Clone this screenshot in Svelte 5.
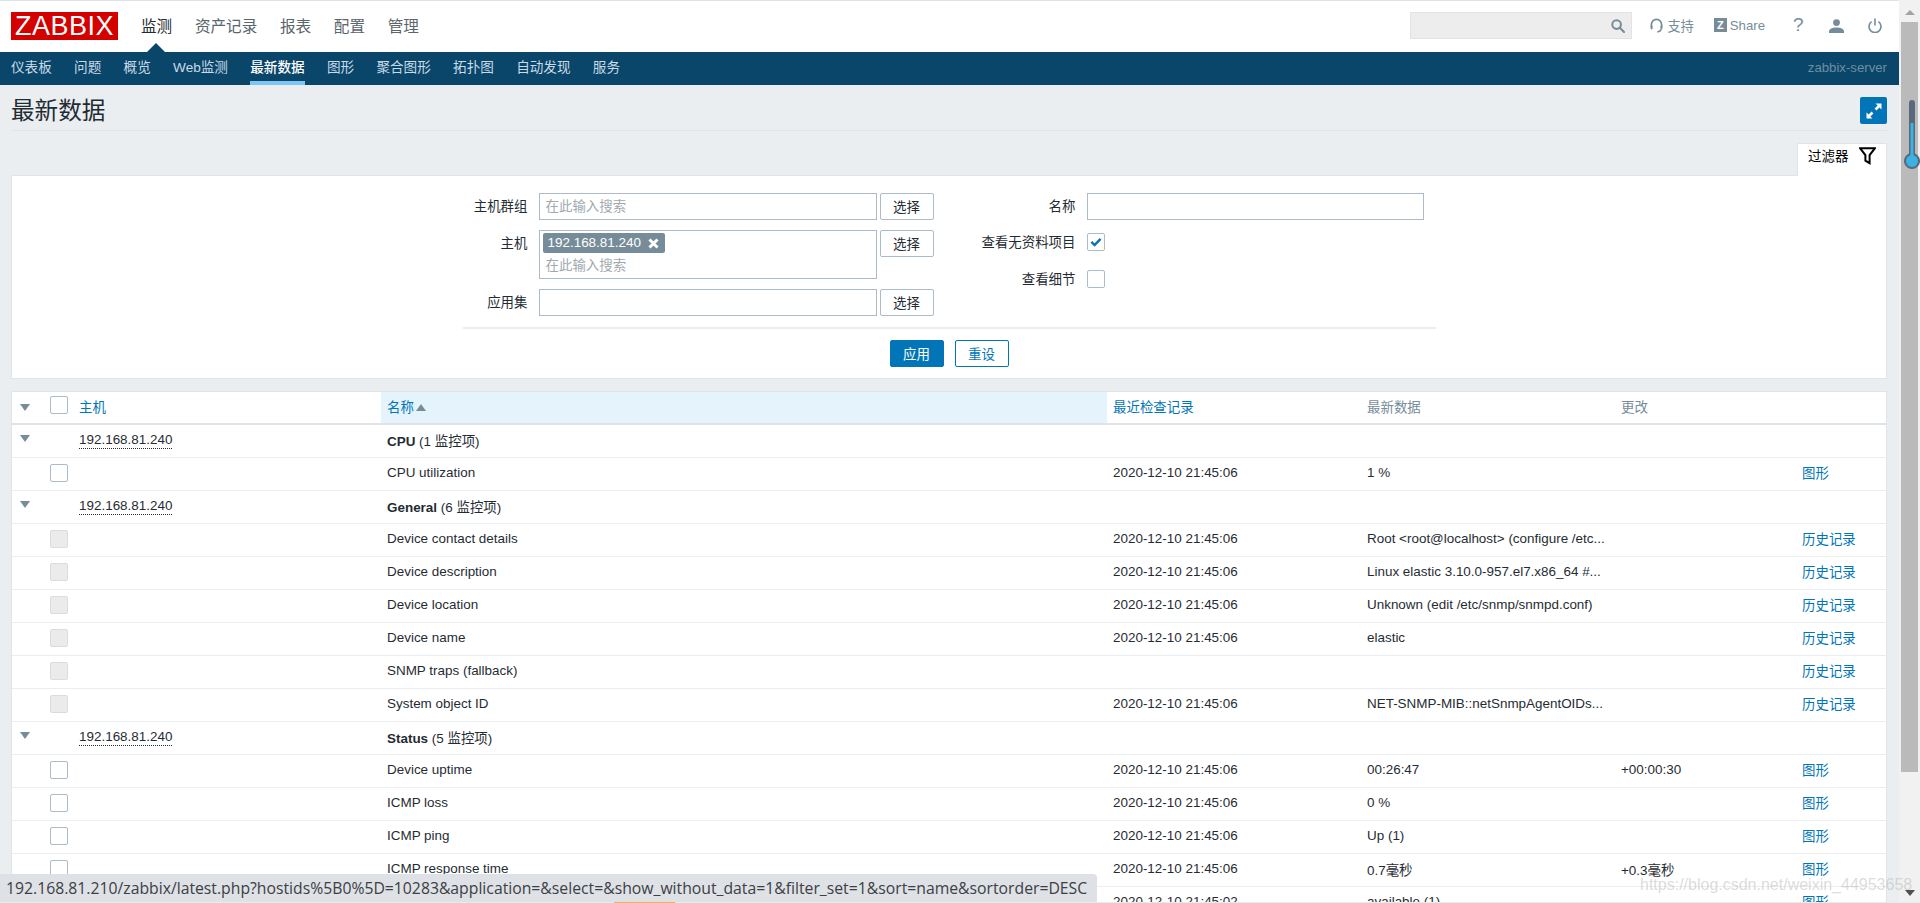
<script>
  const topNav = ['监测', '资产记录', '报表', '配置', '管理'];
  const subNav = ['仪表板', '问题', '概览', 'Web监测', '最新数据', '图形', '聚合图形', '拓扑图', '自动发现', '服务'];
  const T = '2020-12-10 21:45:06';
  const rows = [
    { group: 'CPU', count: '(1 监控项)' },
    { name: 'CPU utilization', time: T, value: '1 %', link: '图形' },
    { group: 'General', count: '(6 监控项)' },
    { name: 'Device contact details', time: T, value: 'Root <root@localhost> (configure /etc...', link: '历史记录', off: true },
    { name: 'Device description', time: T, value: 'Linux elastic 3.10.0-957.el7.x86_64 #...', link: '历史记录', off: true },
    { name: 'Device location', time: T, value: 'Unknown (edit /etc/snmp/snmpd.conf)', link: '历史记录', off: true },
    { name: 'Device name', time: T, value: 'elastic', link: '历史记录', off: true },
    { name: 'SNMP traps (fallback)', time: '', value: '', link: '历史记录', off: true },
    { name: 'System object ID', time: T, value: 'NET-SNMP-MIB::netSnmpAgentOIDs...', link: '历史记录', off: true },
    { group: 'Status', count: '(5 监控项)' },
    { name: 'Device uptime', time: T, value: '00:26:47', change: '+00:00:30', link: '图形' },
    { name: 'ICMP loss', time: T, value: '0 %', link: '图形' },
    { name: 'ICMP ping', time: T, value: 'Up (1)', link: '图形' },
    { name: 'ICMP response time', time: T, value: '0.7毫秒', change: '+0.3毫秒', link: '图形' },
    { name: '', time: '2020-12-10 21:45:02', value: 'available (1)', link: '图形' }
  ];
</script>

<div class="screen">
  <div class="page">
    <header class="topbar">
      <div class="logo">ZABBIX</div>
      <nav class="mainnav">
        {#each topNav as item, i}
          <span class="mainitem" class:current={i === 0}>{item}</span>
        {/each}
      </nav>
      <div class="search">
        <svg width="14" height="14" viewBox="0 0 14 14" fill="none" stroke="#768d99" stroke-width="2"><circle cx="5.6" cy="5.6" r="4.3" /><path d="M8.8 8.8 13 13" stroke-linecap="round" /></svg>
      </div>
      <span class="tool support">
        <svg width="13" height="15" viewBox="0 0 13 15" fill="none" stroke="#768d99" stroke-width="1.7"><path d="M1.4 9V6.4a5.1 5.1 0 0 1 10.2 0V9" /><rect x="0.6" y="7.6" width="2" height="4" rx="1" fill="#768d99" stroke="none" /><rect x="10.4" y="7.6" width="2" height="4" rx="1" fill="#768d99" stroke="none" /><path d="M11 11.4c-.4 1.6-1.6 2.4-3.6 2.4" /></svg>
        支持
      </span>
      <span class="tool share"><span class="zmark">Z</span>Share</span>
      <span class="tool help">?</span>
      <svg class="user" width="15" height="14" viewBox="0 0 15 14" fill="#768d99"><circle cx="7.5" cy="3.6" r="3.4" /><path d="M0 14v-1.6C0 10 3.6 8.6 7.5 8.6s7.5 1.4 7.5 3.8V14z" /></svg>
      <svg class="power" width="14" height="15" viewBox="0 0 14 15" fill="none" stroke="#768d99" stroke-width="1.6"><path d="M7 .5v7" /><path d="M3.6 3.6a6 6 0 1 0 6.8 0" /></svg>
    </header>

    <div class="subnav">
      {#each subNav as item, i}
        <span class="subitem" class:active={i === 4}>{item}</span>
      {/each}
      <span class="server">zabbix-server</span>
    </div>

    <main class="content">
      <div class="titlebar">
        <h1>最新数据</h1>
        <button class="expand" aria-label="全屏">
          <svg width="18" height="18" viewBox="0 0 18 18" fill="#fff"><path d="M10.5 1.5H16.5V7.5L14.4 5.4 11.4 8.4 9.6 6.6 12.6 3.6z" /><path d="M7.5 16.5H1.5V10.5L3.6 12.6 6.6 9.6 8.4 11.4 5.4 14.4z" /></svg>
        </button>
      </div>

      <div class="tabrow">
        <div class="filtertab">
          <span>过滤器</span>
          <svg width="17" height="18" viewBox="0 0 17 18" fill="none" stroke="#000" stroke-width="2"><path d="M1 1.2h15L10.6 8.2v8L6.4 13.6V8.2z" /></svg>
        </div>
      </div>

      <section class="filter">
        <div class="form">
          <div class="formcol left">
            <div class="frow">
              <span class="flabel">主机群组</span>
              <div class="input ph">在此输入搜索</div>
              <button class="select">选择</button>
            </div>
            <div class="frow">
              <span class="flabel hostlabel">主机</span>
              <div class="input multi">
                <span class="tag">192.168.81.240
                  <svg width="11" height="11" viewBox="0 0 11 11" stroke="#fff" stroke-width="3"><path d="M1.5 1.5l8 8M9.5 1.5l-8 8" /></svg>
                </span>
                <span class="ph multiph">在此输入搜索</span>
              </div>
              <button class="select">选择</button>
            </div>
            <div class="frow">
              <span class="flabel">应用集</span>
              <div class="input"></div>
              <button class="select">选择</button>
            </div>
          </div>
          <div class="formcol right">
            <div class="frow">
              <span class="flabel wide">名称</span>
              <div class="input nameinput"></div>
            </div>
            <div class="frow checkrow first">
              <span class="flabel wide">查看无资料项目</span>
              <span class="cb">
                <svg width="14" height="14" viewBox="0 0 14 14" fill="none" stroke="#0275b8" stroke-width="2.4"><path d="M2.4 6.8l3.2 3.2 6-6.2" /></svg>
              </span>
            </div>
            <div class="frow checkrow">
              <span class="flabel wide">查看细节</span>
              <span class="cb"></span>
            </div>
          </div>
        </div>
        <div class="actions">
          <button class="apply">应用</button>
          <button class="reset">重设</button>
        </div>
      </section>

      <section class="listing">
        <table>
          <colgroup>
            <col style="width:32px" /><col style="width:29px" /><col style="width:308px" /><col style="width:726px" />
            <col style="width:254px" /><col style="width:254px" /><col style="width:181px" /><col style="width:90px" />
          </colgroup>
          <thead>
            <tr>
              <th class="arrowcell"><span class="tri down"></span></th>
              <th class="cbcell"><span class="cb"></span></th>
              <th class="lnk">主机</th>
              <th class="lnk sorted">名称<span class="tri up"></span></th>
              <th class="lnk">最近检查记录</th>
              <th>最新数据</th>
              <th>更改</th>
              <th></th>
            </tr>
          </thead>
          <tbody>
            {#each rows as r}
              {#if r.group}
                <tr>
                  <td class="arrowcell grouparrow"><span class="tri down"></span></td>
                  <td></td>
                  <td><span class="hostlink">192.168.81.240</span></td>
                  <td><b>{r.group}</b> {r.count}</td>
                  <td></td><td></td><td></td><td></td>
                </tr>
              {:else}
                <tr>
                  <td></td>
                  <td class="cbcell"><span class="cb" class:off={r.off}></span></td>
                  <td></td>
                  <td>{r.name}</td>
                  <td>{r.time}</td>
                  <td>{r.value}</td>
                  <td>{r.change ?? ''}</td>
                  <td class="lnk">{r.link}</td>
                </tr>
              {/if}
            {/each}
          </tbody>
        </table>
      </section>
    </main>
  </div>

  <aside class="scrollbar">
    <span class="sbup"></span>
    <span class="sbthumb"></span>
    <span class="sbdown"></span>
  </aside>

  <svg class="thermo" width="20" height="72" viewBox="0 0 20 72">
    <path d="M6 5a3 3 0 0 1 6 0V55.6a8 8 0 1 1-6 0z" fill="#59687a" />
    <rect x="7.5" y="25" width="3" height="34" fill="#3bb1e4" />
    <circle cx="9" cy="63" r="6" fill="#3bb1e4" />
  </svg>
  <div class="watermark">https://blog.csdn.net/weixin_44953658</div>
  <div class="status">192.168.81.210/zabbix/latest.php?hostids%5B0%5D=10283&amp;application=&amp;select=&amp;show_without_data=1&amp;filter_set=1&amp;sort=name&amp;sortorder=DESC</div>
  <div class="strip"><span></span></div>
</div>

<style>
  :global(body) {
    margin: 0;
    overflow: hidden;
    background: #fff;
  }
  * { box-sizing: border-box; }
  .screen {
    position: relative;
    display: flex;
    height: 903px;
    overflow: hidden;
    font: 13.45px "Liberation Sans", "Noto Sans CJK SC", sans-serif;
    color: #1f2c33;
  }
  .page {
    width: 1899px;
    flex: none;
    background: #ebeef0;
  }
  .topbar {
    height: 52px;
    display: flex;
    align-items: center;
    padding: 0 17px 2px 11px;
    background: #fff;
    border-top: 1px solid #dfe1e5;
  }
  .logo {
    width: 107px;
    height: 28px;
    background: #d40000;
    color: #fff;
    font-size: 27px;
    line-height: 29px;
    text-align: center;
    letter-spacing: .5px;
    margin-top: 1px;
  }
  .mainnav {
    display: flex;
    gap: 22.7px;
    margin-left: 23px;
    padding-bottom: 2px;
    height: 100%;
    align-items: center;
  }
  .mainitem {
    position: relative;
    font-size: 15.6px;
    color: #5a656c;
    white-space: nowrap;
  }
  .mainitem.current { color: #1f2c33; }
  .mainitem.current::after {
    content: "";
    position: absolute;
    left: 5px;
    top: 29px;
    border-left: 10.5px solid transparent;
    border-right: 10.5px solid transparent;
    border-bottom: 10px solid #0a466a;
  }
  .search {
    width: 222px;
    height: 27px;
    margin-left: auto;
    background: #ededed;
    border: 1px solid #e3e3e3;
    display: flex;
    align-items: center;
    justify-content: flex-end;
    padding-right: 6px;
  }
  .tool {
    display: flex;
    align-items: center;
    color: #768d99;
    white-space: nowrap;
    font-size: 13.2px;
    padding-bottom: 1px;
  }
  .support { margin-left: 18px; gap: 4px; }
  .share { margin-left: 20px; gap: 3px; }
  .zmark {
    width: 13px;
    height: 14px;
    background: #768d99;
    color: #fff;
    font-size: 11px;
    font-weight: 700;
    line-height: 14px;
    text-align: center;
  }
  .tool.help {
    margin-left: 28px;
    width: 9px;
    font-size: 19px;
  }
  .user { margin-left: 27px; }
  .power { margin-left: 24px; }
  .subnav {
    height: 33px;
    background: #0a466a;
    display: flex;
    align-items: stretch;
    padding: 0 12px 0 11px;
    font-size: 13.6px;
  }
  .subitem {
    color: #c9dbe6;
    line-height: 32px;
    margin-right: 22.3px;
    height: 33px;
    white-space: nowrap;
  }
  .subitem.active {
    color: #fff;
    font-weight: 500;
    border-bottom: 4px solid #7dc5f5;
  }
  .server {
    margin-left: auto;
    color: #6f8ea0;
    line-height: 32px;
    font-size: 13.2px;
  }
  .content { padding: 0 12px 0 11px; }
  .titlebar {
    height: 46px;
    display: flex;
    justify-content: space-between;
    align-items: flex-start;
    border-bottom: 1px solid #dfe4e7;
  }
  h1 {
    margin: 9px 0 0;
    font-size: 23.6px;
    font-weight: 400;
    line-height: 34px;
    color: #1f2c33;
  }
  .expand {
    width: 27px;
    height: 27px;
    margin-top: 12px;
    padding: 0;
    background: #0275b8;
    border: 0;
    border-radius: 2px;
    display: flex;
    align-items: center;
    justify-content: center;
  }
  .tabrow {
    display: flex;
    justify-content: flex-end;
    margin-top: 12px;
  }
  .filtertab {
    width: 90px;
    height: 33px;
    margin-bottom: -1px;
    position: relative;
    background: #fff;
    border: 1px solid #dfe4e7;
    border-bottom: 0;
    border-radius: 2px 2px 0 0;
    display: flex;
    justify-content: space-between;
    padding: 3px 10px 0 10px;
    line-height: 20px;
    color: #000;
  }
  .filter {
    background: #fff;
    border: 1px solid #dfe4e7;
    height: 204px;
    padding-top: 17px;
  }
  .form {
    width: 973px;
    margin: 0 auto;
    display: flex;
    border-bottom: 2px solid #ebeef0;
    height: 136px;
  }
  .formcol { display: flex; flex-direction: column; }
  .left { width: 471px; gap: 10px; }
  .right { flex: 1; }
  .frow { display: flex; align-items: flex-start; }
  .flabel {
    width: 65px;
    margin-right: 11px;
    text-align: right;
    line-height: 27px;
    white-space: nowrap;
  }
  .flabel.wide { width: 142px; }
  .input {
    width: 338px;
    height: 27px;
    border: 1px solid #acbbc7;
    margin-right: 3px;
    padding-left: 6px;
    line-height: 25px;
    background: #fff;
  }
  .ph { color: #a0a9ae; }
  .multi { height: 49px; padding: 2px 0 0 3px; }
  .multiph { display: block; padding-left: 3px; line-height: 25px; }
  .tag {
    display: flex;
    align-items: center;
    height: 20px;
    width: 122px;
    padding-left: 5px;
    gap: 7px;
    background: #768d99;
    color: #fff;
    border-radius: 2px;
    line-height: 20px;
  }
  .select {
    width: 54px;
    height: 27px;
    padding: 0 0 2px;
    background: #fff;
    border: 1px solid #acbbc7;
    border-radius: 2px;
    font: inherit;
    color: #1f2c33;
  }
  .nameinput { width: 337px; margin: 0; }
  .checkrow { height: 18px; margin-top: 19px; }
  .checkrow.first { margin-top: 13px; }
  .checkrow .flabel { line-height: 20px; }
  .cb {
    display: block;
    width: 18px;
    height: 18px;
    background: #fff;
    border: 1px solid #acbbc7;
    border-radius: 2px;
    padding: 1px;
  }
  .cb.off { background: #ebebeb; border-color: #dcdcdc; }
  .cb svg { display: block; }
  .actions {
    display: flex;
    justify-content: center;
    gap: 11px;
    margin-top: 11px;
  }
  .apply, .reset {
    width: 54px;
    height: 27px;
    padding: 0 0 2px;
    border-radius: 2px;
    font: inherit;
    border: 1px solid #0275b8;
  }
  .apply { background: #0275b8; color: #fff; }
  .reset { background: #fff; color: #0275b8; }
  .listing {
    margin-top: 12px;
    background: #fff;
    border: 1px solid #dfe4e7;
    border-bottom: 0;
  }
  table {
    width: 1874px;
    table-layout: fixed;
    border-collapse: separate;
    border-spacing: 0;
  }
  th, td {
    height: 33px;
    padding: 0 6px 3px;
    text-align: left;
    font-weight: 400;
    white-space: nowrap;
    overflow: hidden;
    border-bottom: 1px solid #ebeef0;
  }
  th {
    border-bottom: 2px solid #dfe4e7;
    color: #768d99;
    padding-bottom: 4px;
  }
  th.lnk { color: #0275b8; }
  td.lnk { color: #0275b8; padding-bottom: 4px; }
  .sorted { background: #e5f3fd; }
  b { font-weight: 700; }
  th.arrowcell, td.arrowcell { padding: 0 0 2px 8px; }
  td.grouparrow { padding-bottom: 6px; }
  th.cbcell { padding: 0 0 5px 6px; }
  td.cbcell { padding: 0 0 3px 6px; }
  .tri {
    display: inline-block;
    border-left: 5px solid transparent;
    border-right: 5px solid transparent;
    vertical-align: middle;
  }
  .tri.down { border-top: 7px solid #768d99; }
  .tri.up { border-bottom: 7px solid #768d99; margin-left: 2px; }
  .hostlink { border-bottom: 1px dotted #1f2c33; padding-bottom: 1px; }
  .scrollbar {
    flex: 1;
    background: #f1f1f1;
    display: flex;
    flex-direction: column;
    align-items: center;
    position: relative;
  }
  .sbup {
    margin-top: 10px;
    border-left: 5px solid transparent;
    border-right: 5px solid transparent;
    border-bottom: 5px solid #a3a3a3;
  }
  .sbthumb {
    width: 17px;
    height: 750px;
    margin-top: 7px;
    background: #bababa;
  }
  .sbdown {
    margin-top: auto;
    margin-bottom: 7px;
    border-left: 5px solid transparent;
    border-right: 5px solid transparent;
    border-top: 6px solid #505050;
  }
  .thermo {
    position: absolute;
    left: 1903px;
    top: 98px;
  }
  .watermark {
    position: absolute;
    left: 1640px;
    top: 876px;
    font-size: 16px;
    line-height: 18px;
    color: rgba(175, 175, 175, .45);
    white-space: nowrap;
  }
  .status {
    position: absolute;
    left: 0;
    top: 874px;
    width: 1097px;
    height: 28px;
    padding-left: 6px;
    background: #dee1e6;
    border-top-right-radius: 4px;
    font: 15.75px/28px "Open Sans", sans-serif;
    color: #3c4043;
    white-space: nowrap;
  }
  .strip {
    position: absolute;
    left: 0;
    right: 0;
    bottom: 0;
    height: 1px;
    background: #dff0ea;
    padding-left: 614px;
    display: flex;
  }
  .strip span { width: 61px; background: #f5ad5b; }
</style>
